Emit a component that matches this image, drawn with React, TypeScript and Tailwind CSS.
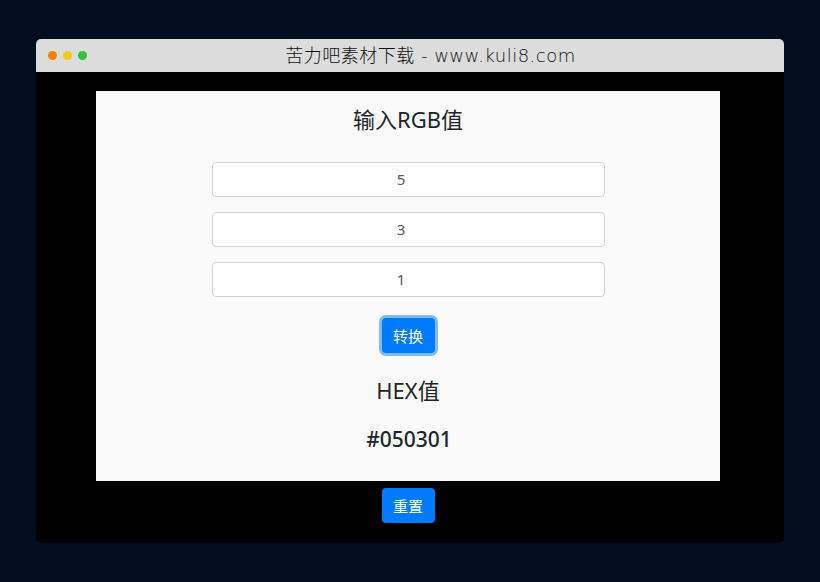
export default function App() {
  const font = "font-['Noto_Sans','Noto_Sans_CJK_SC',sans-serif]";
  return (
    <div className={`h-[582px] w-[820px] overflow-hidden bg-[#000e1f] px-[36px] pt-[39px] ${font}`}>
      <div className="flex h-[504px] flex-col overflow-hidden rounded-[5px] bg-black">
        <div className="relative flex h-[33px] shrink-0 items-center justify-center bg-[#dcdcdc] pl-[41px]">
          <div className="absolute left-[12px] top-[12px] flex gap-[6px]">
            <span className="h-[9px] w-[9px] rounded-full bg-[#ff7f00]" />
            <span className="h-[9px] w-[9px] rounded-full bg-[#f1cb19]" />
            <span className="h-[9px] w-[9px] rounded-full bg-[#2fc23c]" />
          </div>
          <span className="whitespace-pre font-['DejaVu_Sans','Noto_Sans_CJK_SC',sans-serif] text-[18px] font-extralight tracking-[0.5px] text-[#111]">苦力吧素材下载 - www.kuli8.com</span>
        </div>
        <div className="ml-[60px] mr-[64px] mt-[19px] flex h-[390px] flex-col items-center bg-[#fafafa] text-[#212529]">
          <h2 className="mt-[11px] h-[35px] text-[22px] font-normal leading-[35px]">输入RGB值</h2>
          <div className="mt-[25px] flex w-[393px] flex-col gap-[15px]">
            {["5", "3", "1"].map((v) => (
              <input
                key={v}
                readOnly
                value={v}
                className="h-[35px] w-full rounded-[4px] border border-[#d0d4d8] bg-white pb-[2px] pr-[14px] text-center text-[15px] text-[#555b60] outline-none"
              />
            ))}
          </div>
          <button className="mt-[21px] h-[35px] w-[53px] rounded-[4px] bg-[#007bff] pt-[1px] text-[15px] font-normal text-white shadow-[0_0_0_3px_rgba(0,123,255,0.5)]">
            转换
          </button>
          <h2 className="mt-[20px] h-[35px] text-[22px] font-normal leading-[35px]">HEX值</h2>
          <h2 className="mt-[14px] h-[35px] pl-[2px] text-[21px] font-medium leading-[35px]">#050301</h2>
        </div>
        <button className="mx-auto -translate-x-[2px] mt-[7px] h-[35px] w-[53px] rounded-[4px] bg-[#007bff] pt-[1px] text-[15px] font-normal text-white">
          重置
        </button>
      </div>
    </div>
  );
}
